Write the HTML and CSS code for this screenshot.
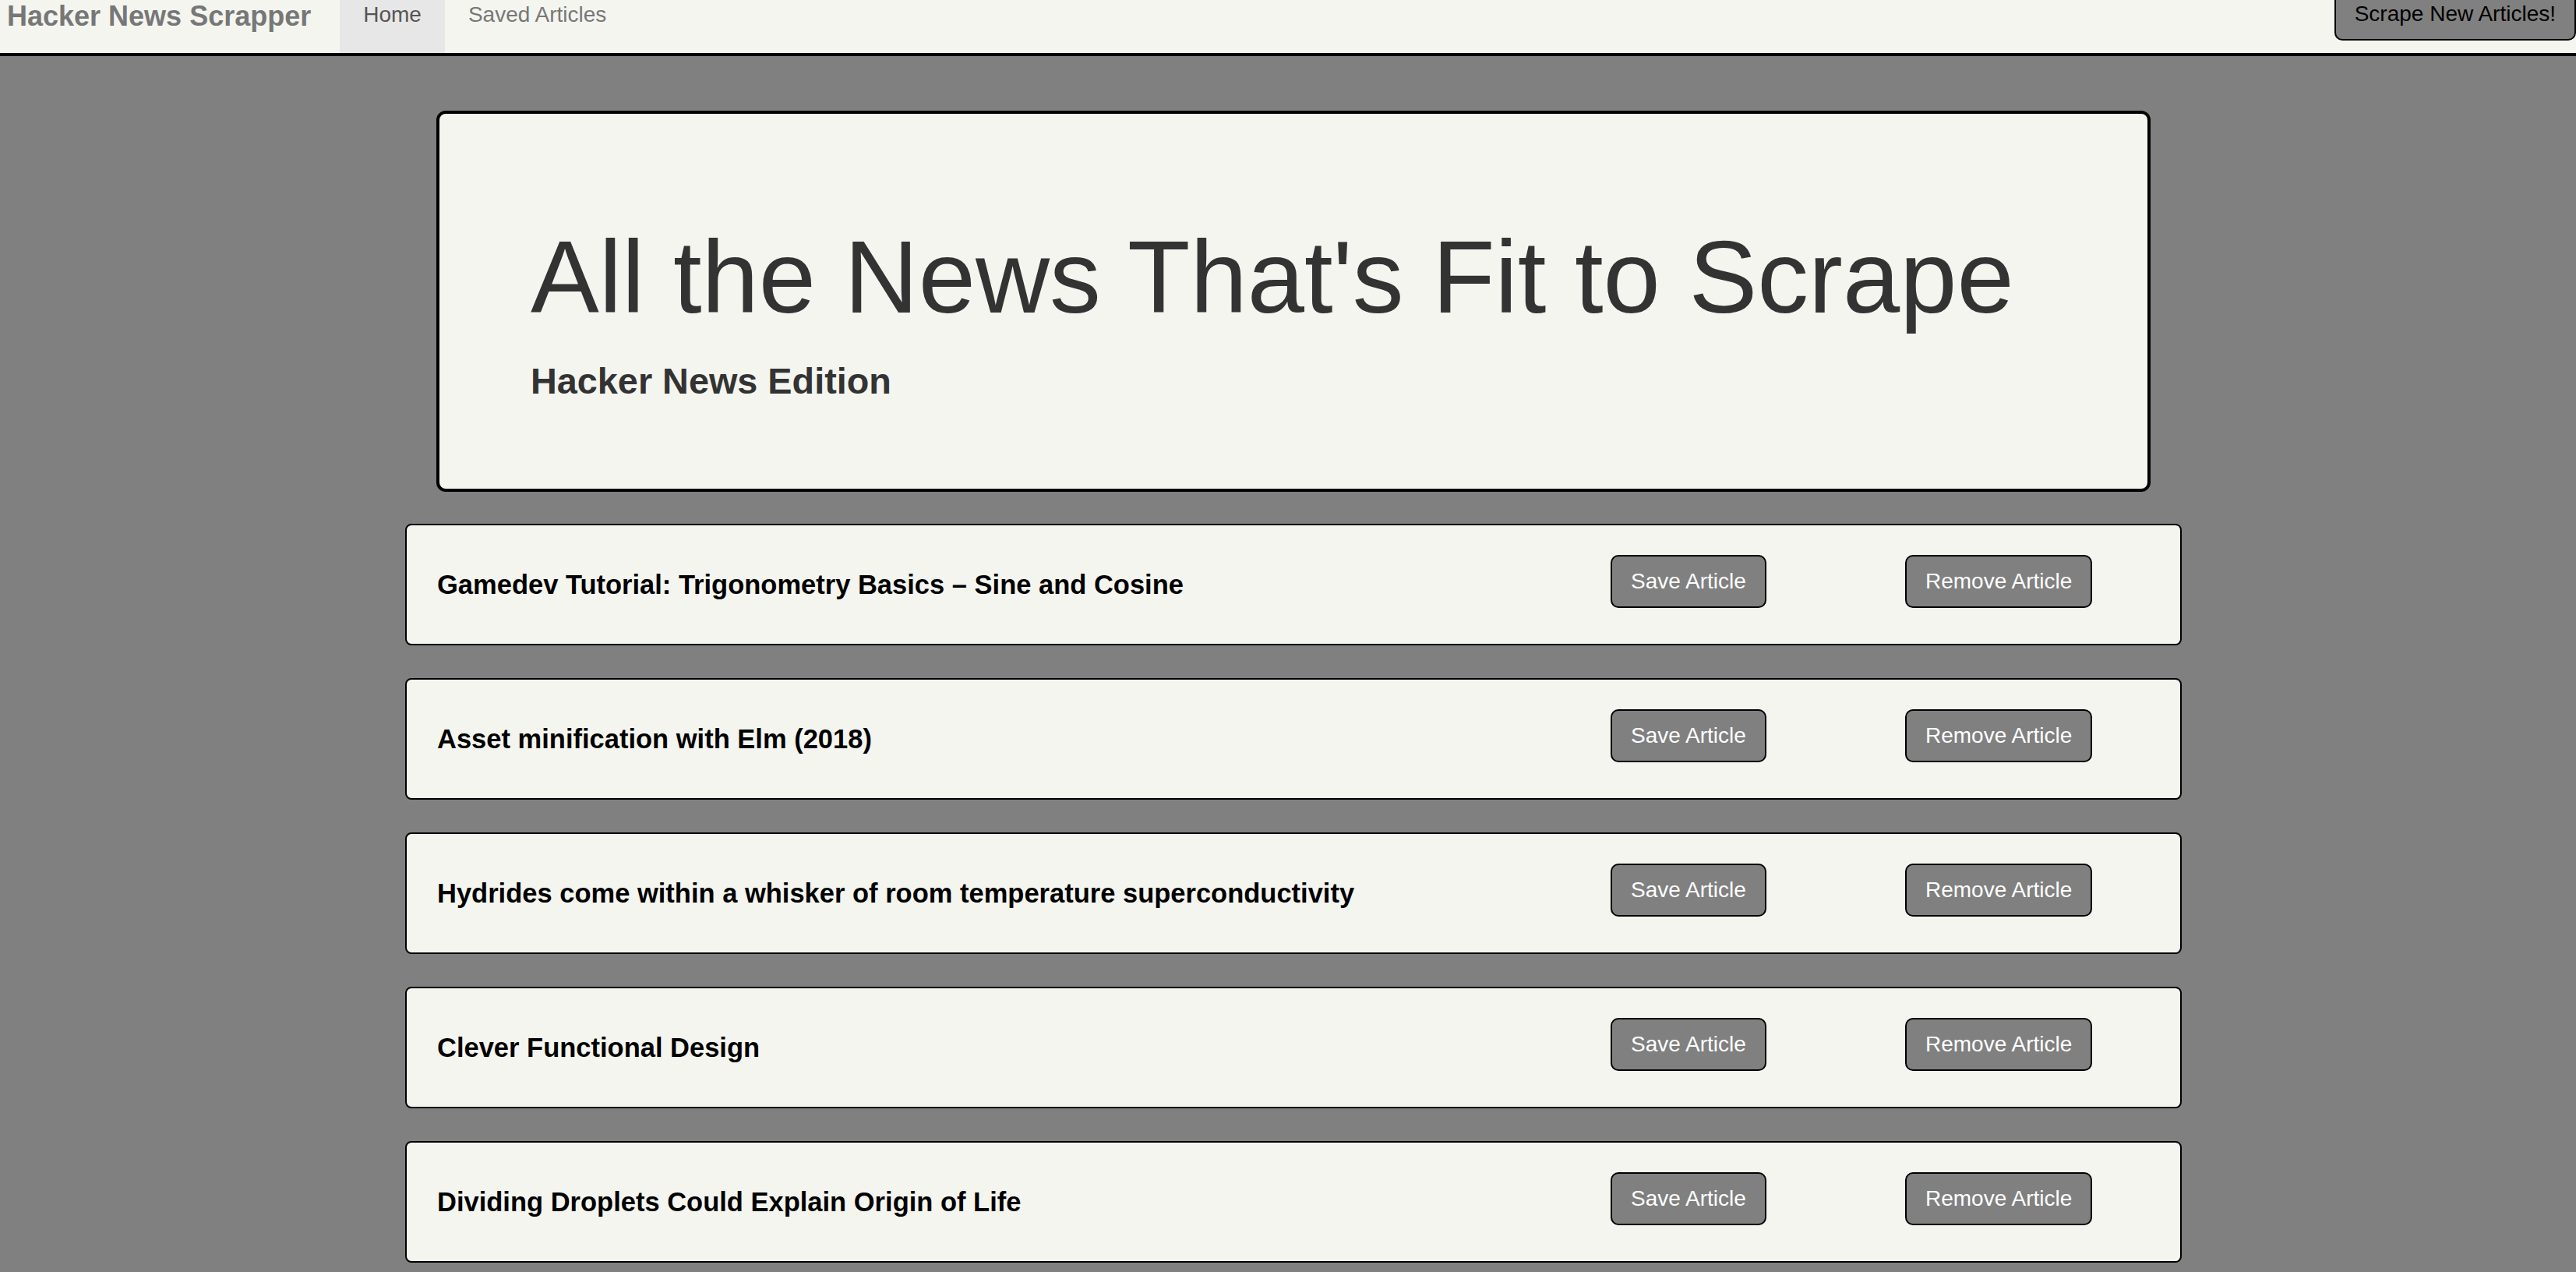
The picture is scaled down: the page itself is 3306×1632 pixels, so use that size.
FILE: index.html
```html
<!DOCTYPE html>
<html lang="en">
<head>
<meta charset="utf-8">
<title>Hacker News Scrapper</title>
<link rel="stylesheet" href="styles.css">
</head>
<body>
<nav class="navbar">
  <a class="brand" href="#">Hacker News Scrapper</a>
  <ul class="nav">
    <li class="nav-item active"><a href="#">Home</a></li>
    <li class="nav-item"><a href="#">Saved Articles</a></li>
  </ul>
  <button class="btn btn-scrape">Scrape New Articles!</button>
</nav>
<main class="container">
  <section class="jumbotron">
    <h1 class="jumbo-title">All the News That's Fit to Scrape</h1>
    <h3 class="jumbo-sub">Hacker News Edition</h3>
  </section>
  <div class="articles">
    <div class="article">
      <h4 class="article-title">Gamedev Tutorial: Trigonometry Basics – Sine and Cosine</h4>
      <div class="article-action"><button class="btn btn-light">Save Article</button></div>
      <div class="article-action"><button class="btn btn-light">Remove Article</button></div>
    </div>
    <div class="article">
      <h4 class="article-title">Asset minification with Elm (2018)</h4>
      <div class="article-action"><button class="btn btn-light">Save Article</button></div>
      <div class="article-action"><button class="btn btn-light">Remove Article</button></div>
    </div>
    <div class="article">
      <h4 class="article-title">Hydrides come within a whisker of room temperature superconductivity</h4>
      <div class="article-action"><button class="btn btn-light">Save Article</button></div>
      <div class="article-action"><button class="btn btn-light">Remove Article</button></div>
    </div>
    <div class="article">
      <h4 class="article-title">Clever Functional Design</h4>
      <div class="article-action"><button class="btn btn-light">Save Article</button></div>
      <div class="article-action"><button class="btn btn-light">Remove Article</button></div>
    </div>
    <div class="article">
      <h4 class="article-title">Dividing Droplets Could Explain Origin of Life</h4>
      <div class="article-action"><button class="btn btn-light">Save Article</button></div>
      <div class="article-action"><button class="btn btn-light">Remove Article</button></div>
    </div>
  </div>
</main>
</body>
</html>
```

FILE: styles.css
```css
html, body {
  margin: 0;
  padding: 0;
}
body {
  background: #808080;
  font-family: "Liberation Sans", Arial, Helvetica, sans-serif;
  color: #333;
}

.navbar {
  display: flex;
  align-items: flex-start;
  height: 68px;
  background: #f4f5ef;
  border-bottom: 4px solid #000;
}
.brand {
  display: block;
  padding: 1px 37px 0 9px;
  font-size: 36px;
  line-height: 40px;
  font-weight: bold;
  color: #777;
  text-decoration: none;
}
.nav {
  display: flex;
  list-style: none;
  margin: 0;
  padding: 0;
  height: 68px;
}
.nav-item a {
  display: block;
  height: 68px;
  box-sizing: border-box;
  padding: 0 30px;
  font-size: 28px;
  line-height: 37px;
  color: #777;
  text-decoration: none;
}
.nav-item.active a {
  background: #e7e7e7;
  color: #555;
}

.btn {
  font-family: "Liberation Sans", Arial, Helvetica, sans-serif;
  font-size: 28px;
  line-height: 40px;
  padding: 12px 24px;
  border: 2px solid #000;
  border-radius: 10px;
  background: #808080;
  cursor: pointer;
}
.btn-scrape {
  margin-left: auto;
  margin-top: -16px;
  color: #000;
}
.btn-light {
  color: #fff;
}

.container {
  width: 2280px;
  margin-left: 520px;
}

.jumbotron {
  margin: 70px 40px 41px;
  padding: 138px 60px 112px 117px;
  background: #f4f5ef;
  border: 4px solid #000;
  border-radius: 12px;
}
.jumbo-title {
  margin: 0;
  font-size: 131.7px;
  line-height: 144px;
  font-weight: normal;
  color: #333;
}
.jumbo-sub {
  margin: 36px 0 0;
  font-size: 46.8px;
  line-height: 51px;
  font-weight: bold;
  color: #333;
}

.article {
  display: grid;
  grid-template-columns: 1fr 378px 353px;
  align-items: start;
  height: 156px;
  box-sizing: border-box;
  margin-bottom: 42px;
  padding: 38px 0 0 39px;
  background: #f4f5ef;
  border: 2px solid #000;
  border-radius: 8px;
}
.article-title {
  margin: 18px 0 0;
  font-size: 34.5px;
  line-height: 40px;
  font-weight: bold;
  color: #000;
}
```
